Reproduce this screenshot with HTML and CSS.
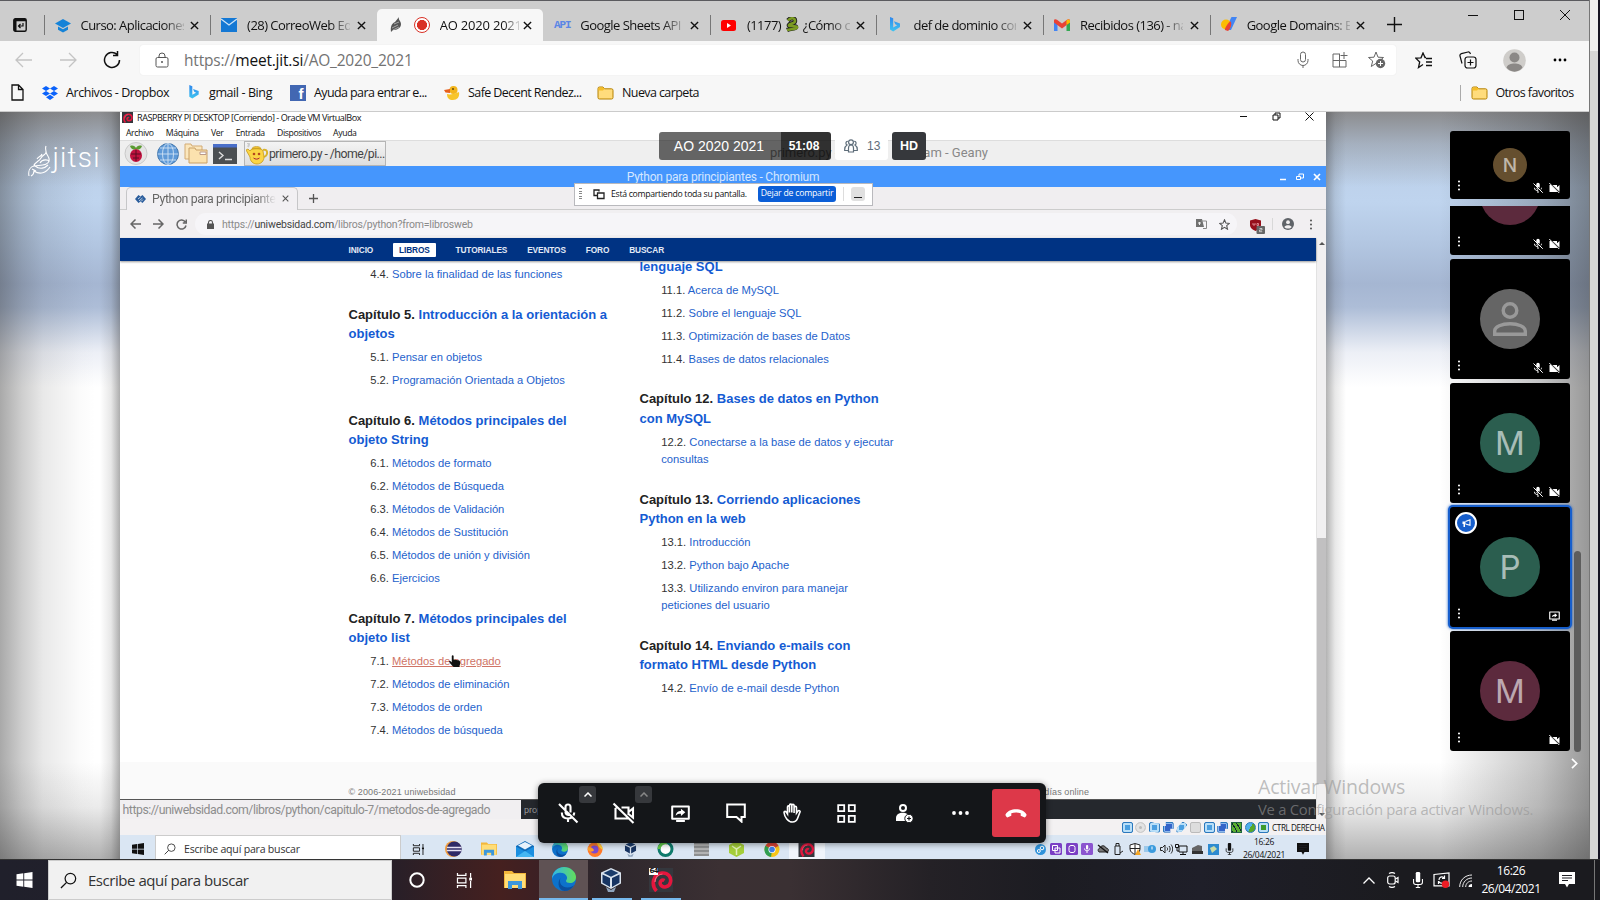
FILE: index.html
```html
<!DOCTYPE html>
<html lang="es">
<head>
<meta charset="utf-8">
<title>AO 2020 2021 | Jitsi Meet</title>
<link rel="stylesheet" href="styles.css">
</head>
<body>
<svg class="defs" width="0" height="0">
  <defs>
    <linearGradient id="bingg" x1="0" y1="0" x2="0" y2="1"><stop offset="0" stop-color="#2f86ec"/><stop offset="1" stop-color="#3fc5f0"/></linearGradient>
    <linearGradient id="edgeg" x1="0" y1="0" x2="1" y2="0"><stop offset="0" stop-color="#2fb6ea"/><stop offset="1" stop-color="#63dd5a"/></linearGradient>
  </defs>
  <symbol id="x" viewBox="0 0 10 10"><path d="M1 1l8 8M9 1l-8 8" fill="none" stroke="currentColor" stroke-width="1.5"/></symbol>
  <symbol id="bing" viewBox="0 0 12 16"><path d="M1 0l3.2 1.2v9.2l4-2.2-2-1L5 4.200l6 2.200v3.600L4.200 14.500 1 12.500z" fill="url(#bingg)"/></symbol>
  <symbol id="mail" viewBox="0 0 16 14"><path d="M0 0h16v14H0z" fill="#1478d4"/><path d="M0 1l8 6 8-6" fill="none" stroke="#cfe4f7" stroke-width="1.300"/></symbol>
  <symbol id="folder" viewBox="0 0 17 14"><path d="M1 2.500a1.500 1.500 0 011.500-1.500H6l1.500 1.800H14.500a1.500 1.500 0 011.500 1.500v7.200a1.500 1.500 0 01-1.500 1.500h-12A1.500 1.500 0 011 11.500z" fill="#ffdc7c" stroke="#b58100"/><path d="M1.500 4.500h4.500l1.500-1.700L6 1.500H2.500L1.500 2.500z" fill="#f5bd28"/></symbol>
  <symbol id="micoff" viewBox="0 0 24 24"><path d="M9.500 9.500V6a2.500 2.500 0 015 0v5.500M9.500 10.500v1a2.600 2.600 0 004 2M5.800 11.500c0 4 2.700 6 6.200 6 1.300 0 2.500-.3 3.500-.9M18.200 11.500c0 1.200-.3 2.200-.8 3.100M12 17.500V21M3 3l18.500 18.500" fill="none" stroke="currentColor" stroke-width="2.100"/></symbol>
  <symbol id="camoff" viewBox="0 0 24 24"><path d="M3.500 7v10.500H17M9.500 6.500H16.500V14M16.500 11l4.500-3.500v9l-4.500-3.500M1.500 2.500l20 19.500M3.500 6.500h2" fill="none" stroke="currentColor" stroke-width="2.100"/></symbol>
  <symbol id="mmic" viewBox="0 0 24 24"><path d="M8.500 9V5a3.500 3.500 0 017 0v6.500z M8.500 11l5 4c-3 1-5-1-5-4z" fill="currentColor"/><path d="M5 11.500c0 4 3 6 7 6M19 11.500c0 1.500-.5 2.500-1 3.300M12 17.500V22M3 3l18.500 18.500" fill="none" stroke="currentColor" stroke-width="2"/></symbol>
  <symbol id="mcam" viewBox="0 0 24 24"><path d="M2 6h2.500l14 14H2zM8 6h9v4.500L22 6v13.500z" fill="currentColor"/><path d="M1.500 2l20 20" stroke="currentColor" stroke-width="2"/></symbol>
  <symbol id="share" viewBox="0 0 24 24"><path d="M2.500 4h19v14h-19zM7 20.500h10" fill="none" stroke="currentColor" stroke-width="2.300" stroke-linejoin="round"/><path d="M6.500 14.500c.5-4 3-5.500 6-5.500V6.500l5 4.200-5 4.200v-2.500c-2.500 0-4.500.3-6 2.100z" fill="currentColor"/></symbol>
  <symbol id="win" viewBox="0 0 16 16"><path d="M0 2.300L6.800 1.300V7.600H0zM7.700 1.200L16 0v7.600H7.700zM0 8.500h6.800v6.300L0 13.800zM7.700 8.500H16V16l-8.300-1.200z" fill="currentColor"/></symbol>
  <symbol id="search" viewBox="0 0 18 18"><circle cx="11" cy="7" r="5.600" fill="none" stroke="currentColor" stroke-width="1.300"/><path d="M7 11L1 17" stroke="currentColor" stroke-width="1.400"/></symbol>
  <symbol id="tview" viewBox="0 0 18 16"><path d="M1.500 0v2.500h9V0M1.500 5.500h9v5h-9zM1.500 16v-2.500h9V16M15.500 0v5M15.500 8.500V16" fill="none" stroke="currentColor" stroke-width="1.300"/><path d="M14 5h3v3h-3z" fill="currentColor"/></symbol>
  <symbol id="explorer" viewBox="0 0 22 18"><path d="M0 0h8l2 2H22v15H0z" fill="#f3b73b"/><path d="M1 3h20v14H1z" fill="#ffdd77"/><path d="M4 18v-8h14v8h-4v-4H8v4z" fill="#3b97dc"/></symbol>
  <symbol id="edge" viewBox="0 0 24 24"><circle cx="12" cy="12" r="12" fill="#0d72cb"/><path d="M0 12C0 5 5.500 0 12 0s12 5 12 10c0 4-3 6-6 6-2.500 0-4-.7-4-2s1.500-1.500 1-4c-.8-3-4-4.500-7.500-4.200C4 6 1 8.500 0 12z" fill="url(#edgeg)"/><path d="M8.500 11c-2 5 1.500 9.500 7 9.500 3 0 5-1 6.500-2.500C20 22 16.500 24 12.500 24 7 23.500 4.500 16 8.500 11z" fill="#0b4f9e"/></symbol>
  <symbol id="vbox" viewBox="0 0 20 24"><path d="M10 0l10 4.500v11L10 21 0 15.500v-11z" fill="#d9e3ee"/><path d="M10 1.500L17.500 5 10 8.700 2.500 5z" fill="#193b6b"/><path d="M1.500 6.500L9 10v9L1.500 14.800zM18.500 6.500L11 10v9l7.500-4.200z" fill="#173462"/><path d="M5 19l5 3 5-3-2 5H7z" fill="#8fa4bd"/></symbol>
  <symbol id="debian" viewBox="0 0 24 24"><path d="M0 0h24v24H0z" fill="#34373d"/><path d="M7.500 23C2 17 3.500 6 13 5c6-.5 9.500 4 8.500 9-1 5.500-8 6.500-10 2.500-1.200-3 1.500-5.500 4-4" fill="none" stroke="#e4163d" stroke-width="3.600"/><path d="M6 14c0-4.500 3-8 7.500-8" fill="none" stroke="#f4627c" stroke-width="1.200"/></symbol>
  <symbol id="note" viewBox="0 0 16 16"><path d="M0 0h16v12H10l-2 3.500L6 12H0z" fill="currentColor"/><path d="M3 3.500h10M3 6h10M3 8.500h6" class="cut"/></symbol>
  <symbol id="dots" viewBox="0 0 4 14"><circle cx="2" cy="2" r="1.300" fill="currentColor"/><circle cx="2" cy="7" r="1.300" fill="currentColor"/><circle cx="2" cy="12" r="1.300" fill="currentColor"/></symbol>
  <symbol id="mic" viewBox="0 0 12 18"><rect x="3.500" y="0" width="5" height="11.500" rx="1.500" fill="currentColor"/><path d="M1 8v3.500c0 1.500 1 2.500 2.500 2.500h5c1.500 0 2.500-1 2.500-2.500V8M6 14v3.500M3.500 17.500h5" fill="none" stroke="currentColor" stroke-width="1.200"/></symbol>
</svg>

<div class="desktop">
  <div class="browser">
    <div class="tabbar">
      <div class="tabmenu"><svg width="14" height="14" viewBox="0 0 14 14"><rect x=".8" y=".8" width="12.400" height="12.400" rx="1.500" fill="none" stroke="#111" stroke-width="1.400"/><path d="M1 1h12v2.300H3.500V13H1z" fill="#111"/><path d="M10 5v3H5.500M7.500 6l-2 2 2 2" fill="none" stroke="#111" stroke-width="1.200"/></svg></div>
      <div class="tab"><i class="fav"><svg width="16" height="15" viewBox="0 0 16 15"><path d="M8 1l8 4.500L8 10 0 5.500z" fill="#1583d8"/><path d="M3 8.500l5 2.800 5-2.800v3.200L8 14.500l-5-2.800z" fill="#1583d8"/></svg></i><span class="tt">Curso: Aplicaciones</span><svg class="cl"><use href="#x"/></svg></div>
      <div class="tab"><i class="fav"><svg width="16" height="14"><use href="#mail"/></svg></i><span class="tt">(28) CorreoWeb Edu</span><svg class="cl"><use href="#x"/></svg></div>
      <div class="tab active"><i class="fav"><svg width="12" height="16" viewBox="0 0 12 16"><path d="M1 15c-.5-5 0-8 4-10l4-5c-1 3 2 4 2 7 0 4-4 6-8 6z" fill="#555"/><path d="M2 11l6-3M4 7l5-2M3 13l6-3" stroke="#bbb" stroke-width=".8"/></svg></i><i class="rec"></i><span class="tt">AO 2020 2021</span><svg class="cl"><use href="#x"/></svg></div>
      <div class="tab"><i class="fav"><b class="api">API</b></i><span class="tt">Google Sheets API</span><svg class="cl"><use href="#x"/></svg></div>
      <div class="tab"><i class="fav"><svg width="15" height="11" viewBox="0 0 15 11"><rect width="15" height="11" rx="2.500" fill="#f00"/><path d="M6 3l4 2.500L6 8z" fill="#fff"/></svg></i><span class="tt">(1177) <svg width="14" height="15" viewBox="0 0 14 15"><path d="M2 3.500C5 0 9 1 9 4S4 6 3 8s7 0 7 2-5 1-9 3" fill="none" stroke="#222" stroke-width="4.500"/><path d="M2 3.500C5 0 9 1 9 4S4 6 3 8s7 0 8 2-6 2-10 3" fill="none" stroke="#7b9b22" stroke-width="2.600"/></svg> ¿Cómo c</span><svg class="cl"><use href="#x"/></svg></div>
      <div class="tab"><i class="fav"><svg width="12" height="16"><use href="#bing"/></svg></i><span class="tt">def de dominio con</span><svg class="cl"><use href="#x"/></svg></div>
      <div class="tab"><i class="fav"><svg width="16" height="12" viewBox="0 0 16 12"><path d="M0 1v11h3.500V5z" fill="#4285f4"/><path d="M16 1v11h-3.500V5z" fill="#34a853"/><path d="M0 1.500C0 0 2 0 3 .8L8 4.500l5-3.700c1-.8 3-.8 3 .7v2L8 9.500 0 3.500z" fill="#ea4335"/><path d="M12.500 1.200c1.200-1 3.500-.8 3.500.8v1.500L12.500 6z" fill="#fbbc04"/></svg></i><span class="tt">Recibidos (136) - na</span><svg class="cl"><use href="#x"/></svg></div>
      <div class="tab"><i class="fav"><svg width="16" height="16" viewBox="0 0 16 16"><path d="M10.500 0H16l-6 13H4z" fill="#4285f4"/><circle cx="5" cy="7.500" r="5" fill="#fbbc04"/><path d="M4 13c-1-1 4-9 5.500-8.500S10 12 7 14z" fill="#ea4335"/></svg></i><span class="tt">Google Domains: B</span><svg class="cl"><use href="#x"/></svg></div>
      <svg class="plus" width="15" height="15" viewBox="0 0 15 15"><path d="M7.500 0v15M0 7.500h15" stroke="#111" stroke-width="1.400"/></svg>
      <div class="wctl">
        <svg viewBox="0 0 12 12"><path d="M1 6.500h10" stroke="#111"/></svg>
        <svg viewBox="0 0 12 12"><rect x="1.500" y="1.500" width="9" height="9" fill="none" stroke="#111"/></svg>
        <svg viewBox="0 0 12 12"><path d="M1 1l10 10M11 1L1 11" stroke="#111"/></svg>
      </div>
    </div>
    <div class="urlrow">
      <div class="navs">
        <svg width="18" height="16" viewBox="0 0 18 16"><path d="M17 8H1.500M8 1L1 8l7 7" fill="none" stroke="#c4c4c4" stroke-width="1.300"/></svg>
        <svg width="18" height="16" viewBox="0 0 18 16"><path d="M1 8h15.500M10 1l7 7-7 7" fill="none" stroke="#c4c4c4" stroke-width="1.300"/></svg>
        <svg width="18" height="18" viewBox="0 0 18 18"><path d="M16.500 9a7.500 7.500 0 11-2.500-5.600M14.500 0v4.500H10" fill="none" stroke="#111" stroke-width="1.500"/></svg>
      </div>
      <div class="omni">
        <svg width="14" height="16" viewBox="0 0 14 16"><rect x="1" y="5.500" width="12" height="9.500" rx="1.500" fill="none" stroke="#555"/><path d="M4 5.500V4a3 3 0 016 0v1.500" fill="none" stroke="#555"/><circle cx="7" cy="10" r="1" fill="#555"/></svg>
        <span class="url">https://<b>meet.jit.si</b>/AO_2020_2021</span>
        <div class="omnir">
          <svg width="14" height="18" viewBox="0 0 14 18"><rect x="4.500" y="1" width="5" height="10" rx="2.500" fill="none" stroke="#666"/><path d="M2 8v1.500a5 5 0 0010 0V8M7 14.500V17" fill="none" stroke="#666"/></svg>
          <svg width="16" height="16" viewBox="0 0 16 16"><path d="M8 2H1v13h13V8.500M1 8.500h13M7.500 2v13M12 0v7M8.500 3.500h7" fill="none" stroke="#666"/></svg>
          <svg width="18" height="18" viewBox="0 0 18 18"><path d="M8 1l2 5.200 5.500.3-4.200 3.600M8 1L6 6.200l-5.500.3L4.700 10 3.300 15.500 8 12.400" fill="none" stroke="#666"/><circle cx="12.500" cy="12.500" r="4.700" fill="#666"/><path d="M12.500 10v5M10 12.500h5" stroke="#fff"/></svg>
        </div>
      </div>
      <div class="acts">
        <svg width="18" height="17" viewBox="0 0 18 17"><path d="M11 5.500h-1L8 1 6 5.800l-5.200.4L4.700 10 3.500 15.500 8 12.500M11 6.500h6M11 10h6M11 13.500h6" fill="none" stroke="#111" stroke-width="1.300"/></svg>
        <svg width="18" height="18" viewBox="0 0 18 18"><rect x="6" y="6" width="11" height="11" rx="2.500" fill="none" stroke="#111" stroke-width="1.200"/><path d="M11.500 8.500v6M8.500 11.500h6M3 12.500L1 5c-.3-1.200.3-2 1.400-2.400L9 1c1.200-.3 2 .3 2.500 2" fill="none" stroke="#111" stroke-width="1.200"/></svg>
        <svg width="23" height="23" viewBox="0 0 23 23"><circle cx="11.500" cy="11.500" r="11.300" fill="#cfcdca"/><circle cx="11.500" cy="8.500" r="5" fill="#8b8886"/><path d="M3.500 18.500C5 13 18 13 19.500 18.500 16 24 7 24 3.500 18.500z" fill="#8b8886"/></svg>
        <svg width="14" height="4" viewBox="0 0 14 4"><circle cx="2" cy="2" r="1.400"/><circle cx="7" cy="2" r="1.400"/><circle cx="12" cy="2" r="1.400"/></svg>
      </div>
    </div>
    <div class="marks">
      <svg class="m-page" width="13" height="17" viewBox="0 0 13 17"><path d="M1 1h6.500L12 5.500V16H1zM7.500 1v4.500H12" fill="none" stroke="#111" stroke-width="1.300"/></svg>
      <span class="mk mk1"><svg width="16" height="14" viewBox="0 0 16 14"><path d="M4 0l4 2.500L4 5 0 2.500zM12 0l4 2.500L12 5 8 2.500zM4 5l4 2.500L4 10 0 7.500zM12 5l4 2.500-4 2.500-4-2.500zM8 8.800l4 2.500L8 14l-4-2.700z" fill="#0a62fb"/></svg><span>Archivos - Dropbox</span></span>
      <span class="mk mk2"><svg width="12" height="15"><use href="#bing"/></svg><span>gmail - Bing</span></span>
      <span class="mk mk3"><i class="fb">f</i><span>Ayuda para entrar e...</span></span>
      <span class="mk mk4"><svg width="16" height="14" viewBox="0 0 16 14"><circle cx="9.500" cy="4" r="4" fill="#f3b51c"/><path d="M3 8c3 1 7 0 12-2 1 5-2 8-6 8s-6-2-6-6z" fill="#f7c52a"/><path d="M6 3L0 4l1.500 2.500L6 7z" fill="#e8601c"/><circle cx="9" cy="3" r=".8"/></svg><span>Safe Decent Rendez...</span></span>
      <span class="mk mk5"><svg width="17" height="14"><use href="#folder"/></svg><span>Nueva carpeta</span></span>
      <span class="mk mk6"><svg width="17" height="14"><use href="#folder"/></svg><span>Otros favoritos</span></span>
    </div>

    <div class="stage">
      <div class="logo"><svg width="23" height="32" viewBox="0 0 23 32"><path d="M1 31c-1-5 1-9 5-10 6-1 14 0 15-5 1-4-2-5-3-9M6 21c0-4 5-4 7-8s5-3 5-6-1-3 0-6M3 31c2-1 3-3 3-5 6 4 12 2 16-4M9 14c2-3 4-2 5-5M12 18c2-4 9-4 9-1M4 24l4 2M7 21c5 4 10 2 13-1" fill="none" stroke="#fff" stroke-width="1.100"/></svg><span>jitsi</span></div>

      <div class="share">
        <div class="vmtitle"><svg width="11" height="11"><use href="#debian"/></svg><span>RASPBERRY PI DESKTOP [Corriendo] - Oracle VM VirtualBox</span>
          <div class="vmctl"><svg viewBox="0 0 9 9"><path d="M1 4.500h7" stroke="#111"/></svg><svg viewBox="0 0 9 9"><path d="M1 3h5v5H1zM3 3V1h5v5H6" fill="none" stroke="#111"/></svg><svg viewBox="0 0 9 9"><path d="M.5.500l8 8M8.500.500l-8 8" stroke="#111"/></svg></div>
        </div>
        <div class="vmmenu"><span>Archivo</span><span>Máquina</span><span>Ver</span><span>Entrada</span><span>Dispositivos</span><span>Ayuda</span></div>
        <div class="panel">
          <svg width="24" height="23" viewBox="0 0 24 23"><circle cx="12" cy="11.500" r="11" fill="#e4e4e4" stroke="#c9c9c9"/><ellipse cx="12" cy="13.500" rx="6" ry="6.500" fill="#c1123f"/><path d="M6 4c3-1 5 0 6 2 1-2 3-3 6-2-1 3-3 4-6 3-3 1-5 0-6-3z" fill="#5b9b32"/><path d="M7 12h10M9 16h6M12 8v11" stroke="#5a0d22"/></svg>
          <svg width="22" height="22" viewBox="0 0 22 22"><circle cx="11" cy="11" r="10.500" fill="#5f9ad8" stroke="#4478ad"/><path d="M11 .5v21M.5 11h21M3 5h16M3 17h16" stroke="#cfe2f5" stroke-width=".9"/><ellipse cx="11" cy="11" rx="5.500" ry="10.500" fill="none" stroke="#cfe2f5" stroke-width=".9"/></svg>
          <svg width="24" height="21" viewBox="0 0 24 21"><path d="M1 1h6l1 2h10v13H1z" fill="#fbe7bd" stroke="#d3ab74"/><path d="M5 5h6l1 2h11v13H5z" fill="#fbe2ae" stroke="#c9a067"/><path d="M16 9h6v2.500h-6z" fill="#fff" stroke="#b98"/></svg>
          <svg width="24" height="20" viewBox="0 0 24 20"><path d="M0 0h24v20H0z" fill="#4b4f52"/><path d="M0 0h24v3.500H0z" fill="#4a6fc9"/><path d="M6 8l4 3.500L6 15M12 15.500h7" fill="none" stroke="#ddd" stroke-width="1.400"/></svg>
          <div class="ptask"><svg width="23" height="22" viewBox="0 0 23 22"><path d="M17 7c5-2 6 6 0 7" fill="none" stroke="#d9b32c" stroke-width="2"/><path d="M4 8C4 5 17 5 17 8l1 6c0 4-3 7-7 7s-7-3-7-7L0 7l2-1z" fill="#fbd545" stroke="#c89a18" stroke-width=".8"/><path d="M6 5.500c1-2.500 8-2.500 9 0z" fill="#f3c535" stroke="#c89a18" stroke-width=".8"/><circle cx="8" cy="11" r="1.300" fill="#b5481c"/><circle cx="13" cy="11" r="1.300" fill="#b5481c"/><path d="M7.500 15c2 1.500 4 1.500 6 0" fill="none" stroke="#a23"/><path d="M1 0c3 0 2 2 1 4" stroke="#ccc" fill="none" stroke-width="2"/></svg><span>primero.py - /home/pi...</span></div>
          <span class="geany"><span>primero.py - A</span><span>ogram - Geany</span></span>
        </div>
        <div class="cbar"><span>Python para principiantes - Chromium</span>
          <div class="cctl"><svg viewBox="0 0 8 8"><path d="M1 6.500h6" stroke="#fff" stroke-width="1.500"/></svg><svg viewBox="0 0 8 8"><path d="M.5 3.500h4v3h-4zM3 3V1h4.500v4H5" fill="none" stroke="#fff"/></svg><svg viewBox="0 0 8 8"><path d="M1 1l6 6M7 1L1 7" stroke="#fff" stroke-width="1.700"/></svg></div>
        </div>
        <div class="ctabs"><div class="ctab"><svg width="11" height="8" viewBox="0 0 11 8"><path d="M3.500 0l2 1.500 2-1.500L11 4 7.500 8l-2-1.500L3.500 8 0 4z" fill="#2a5c9c"/><path d="M3 4l2.500-2M4 6l3.500-3M6 6.500l2-2" stroke="#dfe8f2" stroke-width=".8"/></svg><span>Python para principiantes</span><svg width="7" height="7"><use href="#x"/></svg></div><svg class="cplus" width="9" height="9" viewBox="0 0 9 9"><path d="M4.500 0v9M0 4.500h9" stroke="#555" stroke-width="1.300"/></svg></div>
        <div class="ctool">
          <svg width="11" height="10" viewBox="0 0 11 10"><path d="M11 5H1.500M5.500.500L1 5l4.500 4.500" fill="none" stroke="#666" stroke-width="1.500"/></svg>
          <svg width="11" height="10" viewBox="0 0 11 10"><path d="M0 5h9.500M5.500.500L10 5 5.500 9.500" fill="none" stroke="#666" stroke-width="1.500"/></svg>
          <svg width="11" height="11" viewBox="0 0 11 11"><path d="M9.300 3A4.500 4.500 0 1010 6.500M10.300.500v3.500H6.800" fill="none" stroke="#666" stroke-width="1.500"/></svg>
          <div class="comni"><svg width="7" height="9" viewBox="0 0 7 9"><path d="M0 3.500h7V9H0z" fill="#555"/><path d="M1.500 4V2.500a2 2 0 014 0V4" fill="none" stroke="#555" stroke-width="1.100"/></svg><span>https://<b>uniwebsidad.com</b>/libros/python?from=librosweb</span>
            <svg class="tr" width="11" height="10" viewBox="0 0 11 10"><path d="M0 0h6l2 8H0z" fill="#707070"/><path d="M5 2h5.500v7.500H7" fill="none" stroke="#888"/><path d="M2 4h3M3.500 3v3" stroke="#eee"/></svg>
            <svg width="11" height="11" viewBox="0 0 11 11"><path d="M5.500.800l1.400 3.300 3.500.3-2.700 2.300.8 3.500-3-1.900-3 1.900.8-3.500L.600 4.400l3.500-.3z" fill="none" stroke="#555" stroke-width="1.100"/></svg>
          </div>
          <svg class="ub" width="15" height="15" viewBox="0 0 15 15"><path d="M0 1.500L5.500 0 11 1.500V6c0 3-3 5-5.500 6C3 11 0 9 0 6z" fill="#96101b"/><path d="M3 4v2h2V4M7 4.500h1.500v2H7z" fill="none" stroke="#e8a0a5" stroke-width=".8"/><rect x="6.500" y="7" width="8.500" height="8" rx="1" fill="#666"/><path d="M9.500 9.500h2.500v1.500H9.500v1.700h2.700" fill="none" stroke="#ddd" stroke-width=".8"/></svg>
          <i class="csep"></i>
          <svg class="acc" width="12" height="12" viewBox="0 0 12 12"><circle cx="6" cy="6" r="6" fill="#5f6368"/><circle cx="6" cy="4.200" r="1.900" fill="#f1eff0"/><path d="M2.300 9C3.500 6.800 8.500 6.800 9.700 9 8 11 4 11 2.300 9z" fill="#f1eff0"/></svg>
          <svg class="cd" width="4" height="11"><use href="#dots"/></svg>
        </div>
        <div class="web">
          <div class="page">
            <nav class="nav"><span>INICIO</span><span class="on">LIBROS</span><span>TUTORIALES</span><span>EVENTOS</span><span>FORO</span><span>BUSCAR</span></nav>
            <div class="toc">
              <div class="col">
                <ul><li>4.4. <a>Sobre la finalidad de las funciones</a></li></ul>
                <h3>Capítulo 5. <a>Introducción a la orientación a<br>objetos</a></h3>
                <ul><li>5.1. <a>Pensar en objetos</a></li><li>5.2. <a>Programación Orientada a Objetos</a></li></ul>
                <h3>Capítulo 6. <a>Métodos principales del<br>objeto String</a></h3>
                <ul><li>6.1. <a>Métodos de formato</a></li><li>6.2. <a>Métodos de Búsqueda</a></li><li>6.3. <a>Métodos de Validación</a></li><li>6.4. <a>Métodos de Sustitución</a></li><li>6.5. <a>Métodos de unión y división</a></li><li>6.6. <a>Ejercicios</a></li></ul>
                <h3>Capítulo 7. <a>Métodos principales del<br>objeto list</a></h3>
                <ul><li class="hov">7.1. <a>Métodos de agregado</a><svg class="hand" width="12" height="12" viewBox="0 0 13 13"><path d="M3 1c0-1 2-1 2 0v4l6 1c2 1 1 5 0 7H5C3 11 1 9 0 7c1-1 2 0 3 1z" fill="#111"/></svg></li><li>7.2. <a>Métodos de eliminación</a></li><li>7.3. <a>Métodos de orden</a></li><li>7.4. <a>Métodos de búsqueda</a></li></ul>
              </div>
              <div class="col col2">
                <h3><a>lenguaje SQL</a></h3>
                <ul><li>11.1. <a>Acerca de MySQL</a></li><li>11.2. <a>Sobre el lenguaje SQL</a></li><li>11.3. <a>Optimización de bases de Datos</a></li><li>11.4. <a>Bases de datos relacionales</a></li></ul>
                <h3>Capítulo 12. <a>Bases de datos en Python<br>con MySQL</a></h3>
                <ul><li>12.2. <a>Conectarse a la base de datos y ejecutar<br>consultas</a></li></ul>
                <h3>Capítulo 13. <a>Corriendo aplicaciones<br>Python en la web</a></h3>
                <ul><li>13.1. <a>Introducción</a></li><li>13.2. <a>Python bajo Apache</a></li><li>13.3. <a>Utilizando environ para manejar<br>peticiones del usuario</a></li></ul>
                <h3>Capítulo 14. <a>Enviando e-mails con<br>formato HTML desde Python</a></h3>
                <ul><li>14.2. <a>Envío de e-mail desde Python</a></li></ul>
              </div>
            </div>
            <div class="foot"><span>© 2006-2021 uniwebsidad</span><span>días online</span></div>
            <div class="status"><span class="link">https://uniwebsidad.com/libros/python/capitulo-7/metodos-de-agregado</span><span class="prop">prop</span></div>
          </div>
          <div class="vscroll"><i class="up"></i><i class="thumb"></i><i class="down"></i></div>
        </div>
        <div class="vmstat"><i class="b1"></i><i class="b2"></i><i class="b3"></i><i class="b4"></i><i class="b5"></i><i class="b6"></i><i class="b7"></i><i class="b8"></i><i class="b9"></i><i class="b10"></i><i class="b11"></i><span>CTRL DERECHA</span></div>
        <div class="itask">
          <div class="istart"><svg width="12" height="12"><use href="#win"/></svg></div>
          <div class="isearch"><svg width="12" height="12"><use href="#search"/></svg><span>Escribe aquí para buscar</span></div>
          <div class="iapps">
            <i><svg width="13" height="11"><use href="#tview"/></svg></i>
            <i><svg width="17" height="16" viewBox="0 0 17 16"><circle cx="8" cy="8" r="8" fill="#ef9b3c"/><circle cx="9.300" cy="8" r="7.500" fill="#2f2a66"/><path d="M2 6.500h14.500M1.800 9.500h14.700" stroke="#e6e2f2" stroke-width="1.500"/></svg></i>
            <i><svg width="16" height="14"><use href="#explorer"/></svg></i>
            <i><svg width="18" height="16" viewBox="0 0 18 16"><path d="M0 5l9-5 9 5v11H0z" fill="#0f6cb9"/><path d="M2 4.500L9 1l7 3.500-7 4z" fill="#e7f2fb"/><path d="M0 5.500l9 5 9-5V16H0z" fill="#1b8fe0"/><path d="M0 16l9-6 9 6z" fill="#45b7f2"/></svg></i>
            <i><svg width="18" height="16"><use href="#edge"/></svg></i>
            <i><svg width="16" height="15" viewBox="0 0 16 15"><circle cx="8" cy="7.500" r="7.500" fill="#ff7a2a"/><path d="M9 0c4 1 7 4 6.500 8L12 5z" fill="#ffcf3a"/><circle cx="7.500" cy="7.500" r="4" fill="#7b4bd1"/><path d="M1 5c3 0 5 1 6 3-1 2-4 2-6 0z" fill="#ffa22c"/></svg></i>
            <i><svg width="13" height="16"><use href="#vbox"/></svg></i>
            <i><svg width="17" height="16" viewBox="0 0 17 16"><circle cx="8.500" cy="8" r="6.500" fill="#fff" stroke="#0f7b6c" stroke-width="3"/><path d="M2 8a6.500 6.500 0 018-6" fill="none" stroke="#63c948" stroke-width="3"/></svg></i>
            <i><svg width="17" height="16" viewBox="0 0 17 16"><path d="M1 0h15v15H1z" fill="#8d8f90"/><path d="M1 4h15M1 8h15M1 12h15" stroke="#d8d8d8"/></svg></i>
            <i><svg width="15" height="16" viewBox="0 0 15 16"><path d="M7.500 0L15 4v8l-7.500 4L0 12V4z" fill="#a4ce39"/><path d="M3 5l4.500 3L12 5M7.500 8v6" stroke="#e3f2b9" fill="none" stroke-width="1.500"/></svg></i>
            <i><svg width="16" height="15" viewBox="0 0 16 16"><circle cx="8" cy="8" r="8" fill="#f5c518"/><path d="M8 8L1 4a8 8 0 0114 0z" fill="#dc4437"/><path d="M8 8l-1 8A8 8 0 011 4z" fill="#2f9e52"/><circle cx="8" cy="8" r="3.800" fill="#fff"/><circle cx="8" cy="8" r="3" fill="#3f7fe8"/></svg></i>
            <i class="act"><svg width="17" height="16"><use href="#debian"/></svg></i>
          </div>
          <div class="itray">
            <i><svg width="11" height="11" viewBox="0 0 11 11"><circle cx="5.500" cy="5.500" r="5.500" fill="#2f93db"/><circle cx="7" cy="4" r="1.800" fill="none" stroke="#fff"/><circle cx="3.800" cy="7" r="1.500" fill="none" stroke="#fff"/></svg></i>
            <i><svg width="12" height="12" viewBox="0 0 12 12"><rect width="12" height="12" rx="1.500" fill="#7a3fc4"/><path d="M2.500 2.500h5v5h-5zM5 5h5v5H5z" fill="none" stroke="#fff"/></svg></i>
            <i><svg width="12" height="12" viewBox="0 0 12 12"><rect width="12" height="12" rx="1.500" fill="#7a3fc4"/><rect x="3" y="2.500" width="6" height="7" rx="2" fill="none" stroke="#fff"/></svg></i>
            <i><svg width="12" height="12" viewBox="0 0 12 12"><rect width="12" height="12" rx="1.500" fill="#8b55cf"/><rect x="5" y="2" width="2.200" height="4.500" rx="1" fill="#fff"/><path d="M3.500 5.500c0 3 5 3 5 0M6 8v2" stroke="#fff" fill="none" stroke-width="1"/></svg></i>
            <i><svg width="12" height="10" viewBox="0 0 12 10"><path d="M2 8c-2-2 0-4 1-4 1-3 5-3 6 0 3 0 3 4 1 4z" fill="#777" stroke="#222"/><path d="M1 1l10 8" stroke="#111" stroke-width="1.200"/></svg></i>
            <i><svg width="9" height="12" viewBox="0 0 9 12"><path d="M1 3h5v8.500H1zM2 3V.500h3V3M6 10l3-2" stroke="#222" fill="none"/></svg></i>
            <i><svg width="12" height="12" viewBox="0 0 12 12"><path d="M1 2l5-1.500L11 2v4c0 3-3 4.500-5 5.500C4 10.500 1 9 1 6zM6 1v10M1 5.500h10" fill="#fff" stroke="#222"/><path d="M9 6l3 6H6z" fill="#f5a623"/></svg></i>
            <i><svg width="12" height="10" viewBox="0 0 12 10"><rect x="0" y="2" width="8" height="6" fill="#9cc9ea"/><circle cx="8" cy="5" r="4" fill="#3b9bdd"/><path d="M8 2.500v3" stroke="#fff"/></svg></i>
            <i><svg width="13" height="10" viewBox="0 0 13 10"><path d="M.5 3.500h2L5 1v8L2.500 6.500h-2zM7 3.500c.8 1 .8 2 0 3M9 2c1.500 2 1.500 4 0 6M11 .500c2.300 3 2.300 6 0 9" fill="none" stroke="#222"/></svg></i>
            <i><svg width="13" height="11" viewBox="0 0 13 11"><path d="M4 2h8v6H4zM8 8v2.500M5 10.500h6M.5.500h3v3h-3zM2 3.500V7h2" fill="none" stroke="#111"/></svg></i>
            <i><svg width="11" height="10" viewBox="0 0 11 10"><path d="M0 4l6-3 4 1v7H0z" fill="#666"/><path d="M0 7h11v3H0z" fill="#333"/></svg></i>
            <i><svg width="11" height="11" viewBox="0 0 11 11"><path d="M0 0h11v11H0z" fill="#2d8bd0"/><path d="M2 4l4-2 3 3-5 4z" fill="#c9dba6"/></svg></i>
            <i><svg width="9" height="12"><use href="#mic"/></svg></i>
          </div>
          <div class="iclock"><span>16:26</span><span>26/04/2021</span></div>
          <svg class="inote" width="12" height="12"><use href="#note"/></svg>
        </div>
      </div>

      <div class="film">
        <div class="th t1"><span class="av small brown">N</span><svg class="d"><use href="#dots"/></svg><svg class="m"><use href="#mmic"/></svg><svg class="c"><use href="#mcam"/></svg></div>
        <div class="th t2"><span class="av maroon"></span><svg class="d"><use href="#dots"/></svg><svg class="m"><use href="#mmic"/></svg><svg class="c"><use href="#mcam"/></svg></div>
        <div class="th"><span class="av gray"><svg width="34" height="34" viewBox="0 0 34 34"><circle cx="17" cy="8.500" r="6.800" fill="none" stroke="#999" stroke-width="3.400"/><path d="M1.700 32.300v-3.500c0-4 7-7 15.300-7s15.300 3 15.300 7v3.500z" fill="none" stroke="#999" stroke-width="3.400"/></svg></span><svg class="d"><use href="#dots"/></svg><svg class="m"><use href="#mmic"/></svg><svg class="c"><use href="#mcam"/></svg></div>
        <div class="th"><span class="av green">M</span><svg class="d"><use href="#dots"/></svg><svg class="m"><use href="#mmic"/></svg><svg class="c"><use href="#mcam"/></svg></div>
        <div class="th sel"><span class="av green">P</span><i class="dom"><svg width="9" height="8" viewBox="0 0 9 8"><path d="M.5 2.500h3v2.500h-3zM1.500 5h1.500v3H1.500z" fill="#fff"/><path d="M3.500 2.500L8 .800v5.500L3.500 5" fill="none" stroke="#fff" stroke-width="1.100"/></svg></i><svg class="d"><use href="#dots"/></svg><svg class="c"><use href="#share"/></svg></div>
        <div class="th"><span class="av maroon">M</span><svg class="d"><use href="#dots"/></svg><svg class="c"><use href="#mcam"/></svg></div>
      </div>
      <div class="fscroll"><i></i><svg width="7" height="11" viewBox="0 0 7 11"><path d="M1 .800l4.700 4.700L1 10.200" fill="none" stroke="#fff" stroke-width="1.700"/></svg></div>

      <div class="sharing"><i class="grip"></i><svg width="12" height="11" viewBox="0 0 12 11"><path d="M6 2.500V1H1v5.500h3M4.500 4h6.500v5.500H4.500z" fill="none" stroke="#222" stroke-width="1.300"/></svg><span class="st">Está compartiendo toda su pantalla.</span><span class="sb">Dejar de compartir</span><i class="sl"></i><i class="sm"></i></div>
      <div class="subject"><span class="nm">AO 2020 2021</span><span class="tm">51:08</span><span class="pp"><svg width="14" height="14" viewBox="0 0 14 14"><circle cx="7" cy="3.200" r="2.400" fill="none" stroke="#5e6d7a" stroke-width="1.200"/><path d="M4.500 13V9c0-4 5-4 5 0v4zM3.800 2.500C1.500 2 1.500 5.500 3 6 .500 7.500.500 9 .700 11.500H4M10.200 2.500c2.300-.5 2.300 3 .8 3.500 2.500 1.500 2.500 3 2.300 5.500H10" fill="none" stroke="#5e6d7a" stroke-width="1.200"/></svg>13</span><span class="hd">HD</span></div>
      <div class="tools">
        <i><svg width="24" height="24"><use href="#micoff"/></svg><b><svg width="8" height="5" viewBox="0 0 8 5"><path d="M.5 4.500L4 1l3.500 3.500" fill="none" stroke="#fff" stroke-width="1.500"/></svg></b></i>
        <i><svg width="24" height="24"><use href="#camoff"/></svg><b><svg width="8" height="5" viewBox="0 0 8 5"><path d="M.5 4.500L4 1l3.500 3.500" fill="none" stroke="#888" stroke-width="1.500"/></svg></b></i>
        <i><svg width="21" height="21"><use href="#share"/></svg></i>
        <i><svg width="20" height="20" viewBox="0 0 20 20"><path d="M1.200 1.500h17.600v12.500H15.500v4.500L10.500 14H1.200z" fill="none" stroke="#fff" stroke-width="2"/></svg></i>
        <i><svg width="18" height="20" viewBox="0 0 18 20"><path d="M4.500 11V4c0-1.500 2-1.500 2 0v5.500V2.500c0-1.800 2.300-1.800 2.300 0v7V2.500c0-1.500 2.300-1.500 2.300 0V10 4.500c0-1.500 2.400-1.500 2.400 0V10l1.500-2c.8-1 2.500-.3 2 1l-2.500 6.500c-1 2.500-2.500 3.500-5 3.500-4.500 0-8-5-8.500-9.500C1 8 3 8 3.500 9.500z" fill="none" stroke="#fff" stroke-width="1.600"/></svg></i>
        <i><svg width="19" height="19" viewBox="0 0 19 19"><path d="M1.200 1.200h6v6h-6zM11.800 1.200h6v6h-6zM1.200 11.800h6v6h-6zM11.800 11.800h6v6h-6z" fill="none" stroke="#fff" stroke-width="1.800"/></svg></i>
        <i><svg width="18" height="20" viewBox="0 0 18 20"><circle cx="8" cy="5" r="3" fill="none" stroke="#fff" stroke-width="2"/><path d="M1 18v-3c0-7 13-7 14 0v3z" fill="#fff"/><circle cx="14" cy="15.500" r="4.200" fill="#fff" stroke="#141619"/><path d="M14 13.500v4M12 15.500h4" stroke="#141619" stroke-width="1.200"/></svg></i>
        <i><svg width="17" height="4" viewBox="0 0 17 4"><circle cx="2" cy="2" r="1.900" fill="#fff"/><circle cx="8.500" cy="2" r="1.900" fill="#fff"/><circle cx="15" cy="2" r="1.900" fill="#fff"/></svg></i>
        <i class="hang"><svg width="22" height="9" viewBox="0 0 22 9"><path d="M.500 5.500C4-1.500 18-1.500 21.500 5.500c.3 1-.8 2.500-1.800 3l-4-1.700V4.200c-3-1-6.400-1-9.400 0v2.600l-4 1.700C1.300 8 .200 6.500.500 5.500z" fill="#fff"/></svg></i>
      </div>
      <div class="wm"><span>Activar Windows</span><span>Ve a Configuración para activar Windows.</span></div>
    </div>
  </div>
  <div class="behind"></div>
</div>

<div class="taskbar">
  <div class="start"><svg width="17" height="16"><use href="#win"/></svg></div>
  <div class="tsearch"><svg width="17" height="17"><use href="#search"/></svg><span>Escribe aquí para buscar</span></div>
  <div class="apps">
    <i><svg width="16" height="16" viewBox="0 0 16 16"><circle cx="8" cy="8" r="6.700" fill="none" stroke="#fff" stroke-width="2"/></svg></i>
    <i><svg width="17" height="15"><use href="#tview"/></svg></i>
    <i><svg width="22" height="18"><use href="#explorer"/></svg></i>
    <i class="act"><svg width="24" height="24"><use href="#edge"/></svg></i>
    <i class="run r1"><svg width="20" height="24"><use href="#vbox"/></svg></i>
    <i class="run r2"><svg width="24" height="24"><use href="#debian"/></svg><b>64</b></i>
  </div>
  <div class="tray">
    <i><svg width="12" height="7" viewBox="0 0 12 7"><path d="M.5 6.500L6 1l5.500 5.500" fill="none" stroke="#fff" stroke-width="1.300"/></svg></i>
    <i><svg width="12" height="16" viewBox="0 0 12 16"><rect x=".7" y="4" width="7.500" height="8" rx="2" fill="none" stroke="#fff" stroke-width="1.200"/><path d="M8.500 7l2.500-1.500v5L8.500 9M2 1.500C4 .300 6 .300 8 1.500M2 14.500c2 1.200 4 1.200 6 0" fill="none" stroke="#fff" stroke-width="1.200"/></svg></i>
    <i><svg width="12" height="16"><use href="#mic"/></svg></i>
    <i><svg width="17" height="16" viewBox="0 0 17 16"><path d="M1 2.500L16 .800v13H1z" fill="none" stroke="#fff" stroke-width="1.200"/><path d="M6 8c0-3 3-4 5-2M11.500 3.500V6.500H9M6 9.500c.5 1 1.500 2 3 1.500M5.500 12V9" fill="none" stroke="#fff" stroke-width="1.200"/><circle cx="12.500" cy="12.300" r="3.700" fill="#ed1c24"/></svg></i>
    <i><svg width="13" height="13" viewBox="0 0 13 13"><path d="M.7 13C.700 6 6 1 13 1M3.700 13c0-5 4-9 9.300-9M6.700 13c0-3.500 2.800-6 6.300-6" fill="none" stroke="#eee" stroke-width="1"/><path d="M9.500 13c0-2 1.500-3 3.500-3v3z" fill="#fff"/></svg></i>
  </div>
  <div class="clock"><span>16:26</span><span>26/04/2021</span></div>
  <svg class="tnote" width="16" height="16"><use href="#note"/></svg>
  <i class="peek"></i>
</div>
</body>
</html>
```
FILE: styles.css
```css
* { box-sizing: border-box; }
body { margin: 0; width: 1600px; height: 900px; overflow: hidden; font-family: "Open Sans", "Noto Sans", sans-serif; color: #111; }
i, b { font-style: normal; }
svg { display: block; flex: none; }
span { white-space: nowrap; }
.defs { position: absolute; }
.cut { stroke: #1d1d22; stroke-width: 1.2; }

.desktop { display: flex; height: 859px; background: #151322; }
.browser { width: 1588.500px; display: flex; flex-direction: column; }
.behind { width: 9.500px; background: linear-gradient(#eee 0 51px, #d6d6d6 51px); border-left: 1px solid #777; }

/* browser chrome */
.tabbar { height: 41px; background: #cdcdcd; border-top: 1px solid #5b5b5f; display: flex; align-items: flex-end; position: relative; }
.tabmenu { width: 43.500px; height: 32px; padding: 9px 0 0 13px; }
.tab { width: 166.600px; height: 32px; display: flex; align-items: center; padding-left: 10px; position: relative; font-size: 13px; letter-spacing: -.53px; }
.tab::before { content: ""; position: absolute; left: 0; top: 6px; width: 1px; height: 20px; background: #777; }
.tab.active { background: #f7f7f7; border-radius: 5px 5px 0 0; padding-left: 13px; }
.tab.active::before, .tab.active + .tab::before { display: none; }
.fav { width: 18px; margin-right: 9px; display: flex; justify-content: center; flex: none; }
.tab.active .fav { width: 12px; margin-right: 12px; }
.tab.active .tt { width: 79px; letter-spacing: -.2px; }
.tt { width: 103px; height: 22px; line-height: 22px; overflow: hidden; -webkit-mask-image: linear-gradient(90deg, #000 80%, transparent 104%); mask-image: linear-gradient(90deg, #000 80%, transparent 104%); }
.tt svg { display: inline-block; vertical-align: -2px; margin-left: 2px; }
.cl { position: absolute; right: 11px; top: 12px; width: 9px; height: 9px; }
.rec { width: 16px; height: 16px; border-radius: 50%; border: 1.500px solid #d93025; background: radial-gradient(#d93025 0 4.800px, #fff 5.300px); margin-right: 10px; flex: none; }
.api { font: bold 11px "Liberation Mono", monospace; color: #5b86e5; letter-spacing: -1px; }
.plus { margin: 0 0 9px 11px; }
.wctl { margin-left: auto; align-self: flex-start; display: flex; gap: 34px; padding: 8px 18px 0 0; }
.wctl svg { width: 12px; height: 12px; }
.urlrow { height: 38px; background: #f7f7f7; display: flex; align-items: center; }
.navs { width: 140px; padding: 0 0 0 15px; display: flex; gap: 26px; align-items: center; }
.omni { width: 1256px; height: 30px; border-radius: 3px; background: #fff; display: flex; align-items: center; padding-left: 15px; box-shadow: 0 0 1px #ddd; }
.url { font-size: 15.500px; letter-spacing: -.2px; color: #737373; margin-left: 15px; }
.url b { font-weight: 400; color: #111; }
.omnir { margin-left: auto; display: flex; gap: 21px; align-items: center; padding-right: 10px; }
.omnir svg:nth-child(2) { margin: 0 -1px 0 1px; }
.acts { display: flex; align-items: center; padding-left: 19px; gap: 26px; }
.acts svg:nth-child(4) { margin-left: 1px; }
.marks { height: 33px; background: #f7f7f7; border-bottom: 1px solid #cbcbcb; display: flex; align-items: center; font-size: 12.500px; letter-spacing: -.4px; position: relative; padding-bottom: 5px; }
.m-page { margin-left: 11px; }
.mk { display: flex; align-items: center; gap: 8px; flex: none; }
.mk1 { margin-left: 18px; width: 145px; letter-spacing: -.44px; }
.mk2 { width: 103px; gap: 9px; padding-left: 1px; }
.mk3 { width: 154px; letter-spacing: -.6px; }
.mk4 { width: 153px; letter-spacing: -.58px; }
.mk5 { letter-spacing: -.6px; }
.mk6 { margin-left: auto; padding-right: 15px; border-left: 1px solid #aaa; padding-left: 10px; height: 16px; letter-spacing: -.6px; gap: 7px; }
.fb { width: 16px; height: 16px; background: #4267b2; color: #fff; font: bold 15px/18px "Liberation Sans", sans-serif; text-align: right; padding-right: 3px; }

/* meeting stage */
.stage { height: 747px; display: flex; position: relative; background:
  linear-gradient(90deg, rgba(50,50,50,.42), rgba(50,50,50,.24) 22px, rgba(50,50,50,.11) 43px, rgba(50,50,50,.02) 80px, transparent 95px, transparent 1440px, rgba(50,50,50,.28) 1540px, rgba(50,50,50,.5)),
  linear-gradient(90deg, transparent 100px, rgba(60,60,60,.12) 111px, rgba(60,60,60,.42) 120px, rgba(60,60,60,.42) 1325px, rgba(60,60,60,.12) 1335px, transparent 1346px),
  linear-gradient(rgba(125,120,115,.75), rgba(125,120,115,.35) 32px, transparent 75px, transparent 650px, rgba(90,90,90,.12) 695px, rgba(80,80,80,.45) 747px),
  linear-gradient(#b8cbe4, #bfd4ee 90px, #b3c7e2 130px, #a5b6d2 172px, #adbdd7 195px, #eceff6 240px, #fff 275px); }
.logo { width: 120px; padding: 33px 0 0 27.500px; display: flex; color: #fff; font: 300 28px/1 Roboto, sans-serif; }
.logo span { margin: -1px 0 0 2px; letter-spacing: 1.200px; }
.share { width: 1206px; display: flex; flex-direction: column; background: #fff; overflow: hidden; }
.vmtitle { height: 14px; display: flex; align-items: flex-start; gap: 4px; padding-left: 2px; font-size: 9.100px; letter-spacing: -.47px; }
.vmtitle > span { line-height: 12px; }
.vmctl { margin: 0 12px 0 auto; display: flex; gap: 24px; }
.vmctl svg { width: 9px; height: 9px; }
.vmmenu { height: 14px; display: flex; font-size: 8.700px; line-height: 15px; padding-left: 6px; gap: 12.200px; letter-spacing: -.38px; }
.panel { height: 26px; background: #efefef; border-top: 1px solid #ddd; display: flex; align-items: center; padding-left: 4px; font: 13px Roboto, sans-serif; position: relative; }
.panel > svg { margin-right: 5px; }
.panel > svg:nth-child(1) { margin-right: 9px; }
.ptask { width: 142px; height: 25px; border: 1px solid #b5b5b5; background: linear-gradient(#f4f4f4,#dedede); display: flex; align-items: center; padding-left: 1px; margin-left: 2px; color: #444; font-size: 12.300px; letter-spacing: -.54px; }
.geany { margin: -2px 338px 0 auto; width: 218px; display: flex; justify-content: space-between; color: #888; }
.cbar { height: 21px; background: #4596fd; color: #d5e7ff; font: 12px/22px Roboto, sans-serif; text-align: center; position: relative; }
.cbar > span { letter-spacing: -.23px; }
.cctl { position: absolute; right: 5px; top: 7px; display: flex; gap: 9px; }
.cctl svg { width: 8px; height: 8px; }
.ctabs { height: 23px; background: #f0eef0; display: flex; align-items: center; border-bottom: 1px solid #ccc; }
.ctab { width: 172px; height: 23px; margin-left: 6px; border: 1px solid #c6c6c8; border-bottom: 0; border-radius: 5px 5px 0 0; background: #f2f0f3; display: flex; align-items: center; padding-left: 8px; font: 12.300px Roboto, sans-serif; color: #666; gap: 6px; }
.ctab span { width: 124px; overflow: hidden; -webkit-mask-image: linear-gradient(90deg,#000 85%,transparent); mask-image: linear-gradient(90deg,#000 85%,transparent); letter-spacing: -.38px; }
.ctab svg { color: #555; }
.cplus { margin-left: 11px; }
.ctool { height: 28px; background: #f1eff1; display: flex; align-items: center; padding-left: 10px; gap: 12px; }
.comni { width: 1042px; height: 22px; border-radius: 11px; background: #f6f5f8; display: flex; align-items: center; padding: 0 7px 0 12px; gap: 8px; margin-left: -4px; font: 10.500px Roboto, sans-serif; letter-spacing: -.2px; color: #8a8a8a; flex: none; }
.comni b { font-weight: 400; color: #444; }
.comni .tr { margin: 0 4px 0 auto; }
.ub { margin: 4px 0 0 1px; }
.csep { width: 1px; height: 12px; background: #d8d8d8; margin-left: -5px; }
.acc { margin-left: -3px; }
.cd { color: #555; margin-left: 3px; }
.web { height: 581px; display: flex; }
.page { width: 1196px; display: flex; flex-direction: column; position: relative; }
.nav { height: 23px; background: #003383; display: flex; align-items: center; padding-left: 228.500px; color: #e3eaf6; font: bold 8.300px "Liberation Sans", sans-serif; box-shadow: 0 1px 2px rgba(0,0,0,.4); z-index: 1; gap: 19.900px; letter-spacing: -.11px; }
.nav .on { background: #fff; color: #003383; height: 14px; line-height: 15px; width: 42.500px; text-align: center; border-radius: 1px; }
.toc { height: 501px; display: flex; padding-left: 228.500px; overflow: hidden; font: 11.200px/17.300px "Liberation Sans", Arial, sans-serif; color: #333; }
.col { width: 291px; padding-top: 4.700px; }
.col2 { padding-top: 0; margin-top: -4.400px; letter-spacing: .02px; }
.toc h3 { margin: 21.600px 0 5.800px; font-size: 13px; line-height: 19.200px; color: #222; white-space: nowrap; letter-spacing: 0; }
.col2 h3:first-child { margin-top: 0; }
.toc ul { margin: 0; padding: 0 0 0 21.700px; list-style: none; }
.toc li { margin-bottom: 5.700px; white-space: nowrap; position: relative; }
.toc li:last-child { margin-bottom: 0; }
.toc a { color: #1e62cc; }
.toc h3 a { color: #145bd3; }
.toc .hov a { color: #cf7466; text-decoration: underline; }
.hand { position: absolute; left: 79px; top: 2px; }
.foot { height: 37px; background: #fafafa; display: flex; justify-content: space-between; padding: 24px 227px 0 228.500px; font: 9px/13px "Liberation Sans", sans-serif; color: #777; letter-spacing: .1px; }
.status { height: 20px; background: #25282d; border-top: 1px solid #555; display: flex; font: 12.300px/20px Roboto, sans-serif; }
.link { width: 401px; background: #f1eff1; color: #8d8d8d; padding-left: 2.500px; letter-spacing: -.46px; flex: none; }
.prop { font-size: 9px; color: #999; padding-left: 3px; }
.vscroll { width: 10px; background: #f1f0f1; display: flex; flex-direction: column; align-items: center; border-left: 1px solid #e2e2e2; padding: 4px 0 3px; }
.up, .down { border: 3px solid transparent; border-bottom-color: #555; border-top: 0; }
.down { border-top: 3px solid #555; border-bottom: 0; margin-top: auto; }
.thumb { width: 9px; height: 246px; background: #c1c0c1; margin-top: 293px; }
.vmstat { height: 16px; background: #f3f1f2; display: flex; align-items: center; gap: 2.700px; padding-left: 1001.500px; font-size: 8.200px; letter-spacing: -.42px; }
.vmstat i { width: 11px; height: 11px; flex: none; border-radius: 2px; background: #4b9fe0; border: 1px solid #2b78bd; box-shadow: inset 0 0 0 2px #b9dff8; }
.vmstat .b2 { border-radius: 50%; background: #bbb; border-color: #ccc; box-shadow: inset 0 0 0 3px #e3e3e3; }
.vmstat .b3 { clip-path: polygon(0 0, 60% 15%, 100% 20%, 100% 100%, 0 90%); }
.vmstat .b4, .vmstat .b8 { background: #3465c8; box-shadow: inset 0 0 0 1px #8db8ee; clip-path: polygon(30% 0, 100% 0, 100% 65%, 70% 65%, 70% 100%, 0 100%, 0 40%, 30% 40%); }
.vmstat .b5 { clip-path: polygon(60% 0, 100% 30%, 50% 90%, 0 100%, 10% 55%); }
.vmstat .b6 { background: #ddd; border-color: #bbb; box-shadow: none; }
.vmstat .b9 { background: repeating-linear-gradient(60deg, #123 0 1px, #59b030 1px 4px); border-color: #264; box-shadow: none; border-radius: 0; }
.vmstat .b10 { border-radius: 50%; background: linear-gradient(120deg,#4fb0ea 50%,#57a829 50%); box-shadow: none; }
.vmstat .b11 { background: #3d9b2e; }
.itask { height: 24px; background: #dae6f3; display: flex; align-items: stretch; position: relative; font-size: 10.600px; }
.istart { width: 35px; display: flex; align-items: center; justify-content: center; padding-top: 4px; }
.isearch { width: 246px; background: #fff; display: flex; align-items: center; gap: 8px; padding: 3px 0 0 8px; border: 1px solid #ccc; border-bottom: 0; color: #333; letter-spacing: -.22px; }
.iapps { display: flex; }
.iapps i { width: 35.300px; display: flex; align-items: center; justify-content: center; padding-top: 4px; }
.iapps .act { background: #f0f5fb; }
.itray { display: flex; margin-left: auto; padding-top: 4px; }
.itray i { width: 15.750px; display: flex; align-items: center; justify-content: center; }
.iclock { width: 44px; display: flex; flex-direction: column; align-items: center; font-size: 8.500px; line-height: 13px; letter-spacing: -.3px; margin-left: 5px; }
.inote { margin: 8px 17px 0 11px; }

/* filmstrip */
.film { width: 120px; margin: 19px 0 0 124px; display: flex; flex-direction: column; gap: 4px; }
.th { height: 120px; flex: none; border-radius: 3px; background: #000; position: relative; display: flex; align-items: center; justify-content: center; color: #fff; overflow: hidden; }
.t1 { height: 68px; margin-bottom: 3px; }
.t2 { height: 49px; align-items: flex-start; border-radius: 0 0 3px 3px; }
.t2 .av { margin-top: -41px; }
.sel { overflow: visible; box-shadow: 0 0 0 2px #165ecc, 0 0 3px 2px #165ecc; }
.av { width: 60px; height: 60px; border-radius: 50%; flex: none; display: flex; align-items: center; justify-content: center; font: 33px Inter, sans-serif; color: rgba(255,255,255,.6); }
.small { width: 34px; height: 34px; font-size: 19px; font-weight: 500; }
.brown { background: #654f2f; } .maroon { background: #5c2a3d; } .gray { background: #656565; } .green { background: #2b5e4f; }
.th .d { position: absolute; left: 7px; bottom: 8px; width: 4px; height: 11px; }
.th .m { position: absolute; left: 82px; bottom: 5px; width: 12px; height: 12px; }
.th .c { position: absolute; left: 98px; bottom: 5px; width: 13px; height: 12px; }
.dom { position: absolute; left: 5px; top: 5px; width: 22px; height: 22px; border-radius: 50%; border: 2px solid #fff; background: #165ecc; display: flex; align-items: center; justify-content: center; }
.fscroll { margin: 439px 0 0 4px; }
.fscroll i { display: block; width: 7px; height: 201px; border-radius: 4px; background: #5d5d5d; }
.fscroll svg { margin: 6px 0 0 -3px; }

/* overlays above the shared screen */
.sharing { position: absolute; left: 574px; top: 70.500px; width: 299px; height: 23px; background: #fff; border: 1px solid #b9b9bd; display: flex; align-items: center; font-size: 8.700px; }
.grip { width: 3px; height: 12px; margin: 0 11px 0 4px; background: repeating-linear-gradient(#888 0 1px, transparent 1px 2.500px); }
.st { margin-left: 6px; width: 147px; letter-spacing: -.29px; }
.sb { background: #0b5ed7; color: #fff; width: 78px; height: 16px; line-height: 15px; border-radius: 3px; text-align: center; letter-spacing: -.22px; }
.sl { width: 1px; height: 14px; background: #ddd; margin: 0 7px; }
.sm { width: 14px; height: 14px; border-radius: 3px; background: #e0e0e0; position: relative; }
.sm::after { content: ""; position: absolute; left: 3px; right: 3px; bottom: 3px; height: 1px; background: #222; }
.subject { position: absolute; left: 659px; top: 20px; height: 28px; display: flex; color: #fff; font: 14px/28px "Liberation Sans", sans-serif; }
.subject > span { text-align: center; }
.nm { width: 122px; background: rgba(0,0,0,.58); border-radius: 3px 0 0 3px; padding-right: 2px; }
.tm { width: 50px; background: rgba(0,0,0,.8); border-radius: 0 3px 3px 0; font-size: 12px; font-weight: 700; margin-right: 4px; padding-right: 4px; }
.subject .pp { width: 53px; background: #fff; border-radius: 3px; color: #5e6d7a; font-size: 12px; display: flex; align-items: center; gap: 9px; padding-left: 9px; margin-right: 4px; }
.hd { width: 34px; background: #36383c; border-radius: 3px; font-size: 12.500px; font-weight: 700; }
.tools { position: absolute; left: 538px; top: 671px; width: 508px; height: 60px; border-radius: 6px; background: #141619; box-shadow: 0 1px 6px rgba(0,0,0,.45); display: flex; align-items: center; padding-left: 2px; color: #fff; }
.tools i { width: 56px; height: 48px; display: flex; align-items: center; justify-content: center; position: relative; }
.tools i:nth-child(6) svg { margin-right: 3px; }
.tools b { position: absolute; left: 39px; top: -3px; width: 17px; height: 17px; border-radius: 3px; background: #36383c; display: flex; align-items: center; justify-content: center; }
.tools .hang { width: 48px; background: #dd3849; border-radius: 3px; margin-left: 4px; }
.wm { position: absolute; left: 1258px; top: 662px; display: flex; flex-direction: column; color: rgba(150,150,150,.62); font-size: 14.800px; line-height: 19px; letter-spacing: -.25px; }
.wm span:first-child { font-size: 19.500px; line-height: 26px; letter-spacing: -.2px; }

/* windows taskbar */
.taskbar { height: 41px; display: flex; position: relative; color: #fff; background: linear-gradient(90deg, #20202b 0, #241f29 380px, #45201f 500px, #3c2024 540px, #2c262c 600px, #3b3033 720px, #3a3033 790px, #242126 930px, #1c1c22 1050px, #1f1f29 1200px, #1b1b1f 1400px); border-top: 1px solid #333; }
.start { width: 48px; display: flex; align-items: center; justify-content: center; }
.tsearch { width: 344px; background: #f1f1f1; border: 1px solid #ccc; display: flex; align-items: center; gap: 11px; padding-left: 11px; color: #333; font-size: 15px; letter-spacing: -.46px; }
.tsearch svg { color: #111; }
.apps { display: flex; }
.apps i { width: 49.100px; display: flex; align-items: center; justify-content: center; position: relative; }
.apps i:nth-child(2) svg { margin-right: 3px; }
.apps .act { background: #5f5254; border-bottom: 2px solid #76b9ed; }
.apps .run::after { content: ""; position: absolute; left: 4px; right: 2px; bottom: 0; height: 2px; background: #76b9ed; }
.apps .r1 { width: 46px; }
.apps .r2 { width: 54px; }
.apps .r2::after { left: 7px; right: 7px; }
.apps b { position: absolute; left: 15px; top: 8px; background: #fff; color: #111; font: bold 7px/7px "DejaVu Sans", sans-serif; letter-spacing: -.5px; }
.tray { display: flex; margin-left: auto; }
.tray i { width: 24.200px; display: flex; align-items: center; justify-content: center; }
.clock { width: 66px; display: flex; flex-direction: column; align-items: center; font-size: 12px; line-height: 18px; padding-top: 2px; letter-spacing: -.45px; }
.tnote { margin: 12px 19px 0 15px; }
.peek { width: 1px; background: #777; margin-right: 5px; }
```
